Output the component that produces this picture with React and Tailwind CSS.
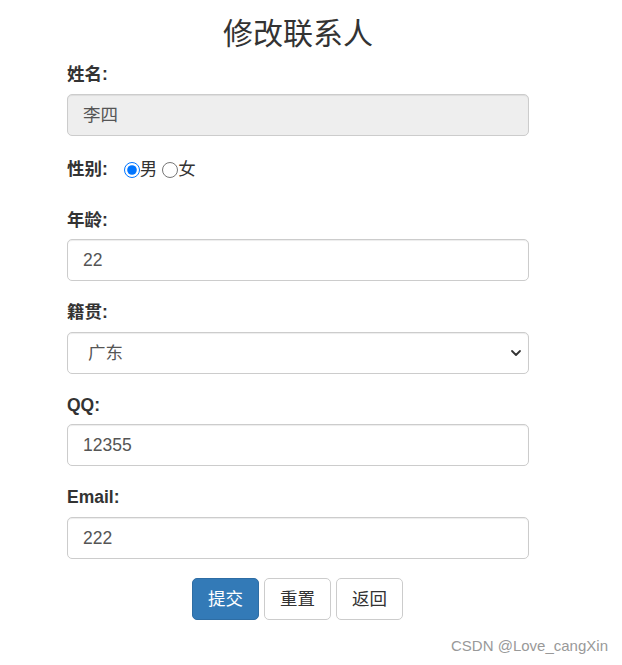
import React from "react";

const font = { fontFamily: '"Liberation Sans", "Noto Sans CJK SC", sans-serif' };

function Label({ children, className = "" }) {
  return (
    <div className={"h-[25px] leading-[25px] text-[17.5px] font-bold text-[#333] " + className}>
      {children}
    </div>
  );
}

function Field({ value, disabled }) {
  return (
    <div
      className={
        "h-[42px] w-full rounded-[5px] border border-[#ccc] px-[15px] flex items-center text-[17.5px] text-[#555] shadow-[inset_0_1px_1px_rgba(0,0,0,0.075)] " +
        (disabled ? "bg-[#eee]" : "bg-white")
      }
    >
      {value}
    </div>
  );
}

export default function App() {
  return (
    <div className="relative w-[622px] h-[665px] bg-white" style={font}>
      <div className="ml-[67px] w-[462px] pt-[17px]">
        <h3 className="h-[33px] leading-[33px] text-[30px] text-center text-[#333] font-normal mb-[12px]">
          修改联系人
        </h3>

        <div className="mb-[21px]">
          <Label className="mb-[7px]">姓名:</Label>
          <Field value="李四" disabled />
        </div>

        <div className="h-[25px] flex items-center mb-[26px]">
          <Label>性别:</Label>
          <input type="radio" name="sex" defaultChecked className="ml-[16px] w-[16px] h-[16px] m-0 accent-[#0075ff]" />
          <span className="text-[17.5px] text-[#333] leading-[25px]">男</span>
          <input type="radio" name="sex" className="ml-[5px] w-[16px] h-[16px] m-0" />
          <span className="text-[17.5px] text-[#333] leading-[25px]">女</span>
        </div>

        <div className="mb-[19px]">
          <Label className="mb-[6px]">年龄:</Label>
          <Field value="22" />
        </div>

        <div className="mb-[19px]">
          <Label className="mb-[7px]">籍贯:</Label>
          <div className="relative h-[42px] w-full rounded-[5px] border border-[#ccc] pl-[20px] flex items-center text-[17.5px] text-[#555] bg-white shadow-[inset_0_1px_1px_rgba(0,0,0,0.075)]">
            广东
            <svg className="absolute right-[6px] top-[15px]" width="12" height="10" viewBox="0 0 12 10">
              <path d="M2 3 L6 7 L10 3" fill="none" stroke="#333" strokeWidth="1.8" strokeLinecap="round" strokeLinejoin="round" />
            </svg>
          </div>
        </div>

        <div className="mb-[19px]">
          <Label className="mb-[6px]">QQ:</Label>
          <Field value="12355" />
        </div>

        <div className="mb-[19px]">
          <Label className="mb-[7px]">Email:</Label>
          <Field value="222" />
        </div>

        <div className="flex justify-center gap-[5px] -ml-[1px]">
          <button className="h-[42px] px-[15px] rounded-[5px] border border-[#2e6da4] bg-[#337ab7] text-white text-[17.5px]">
            提交
          </button>
          <button className="h-[42px] px-[15px] rounded-[5px] border border-[#ccc] bg-white text-[#333] text-[17.5px]">
            重置
          </button>
          <button className="h-[42px] px-[15px] rounded-[5px] border border-[#ccc] bg-white text-[#333] text-[17.5px]">
            返回
          </button>
        </div>
      </div>

      <div className="absolute right-[14px] top-[636px] text-[15px] leading-[20px] text-[#999]">
        CSDN @Love_cangXin
      </div>
    </div>
  );
}
